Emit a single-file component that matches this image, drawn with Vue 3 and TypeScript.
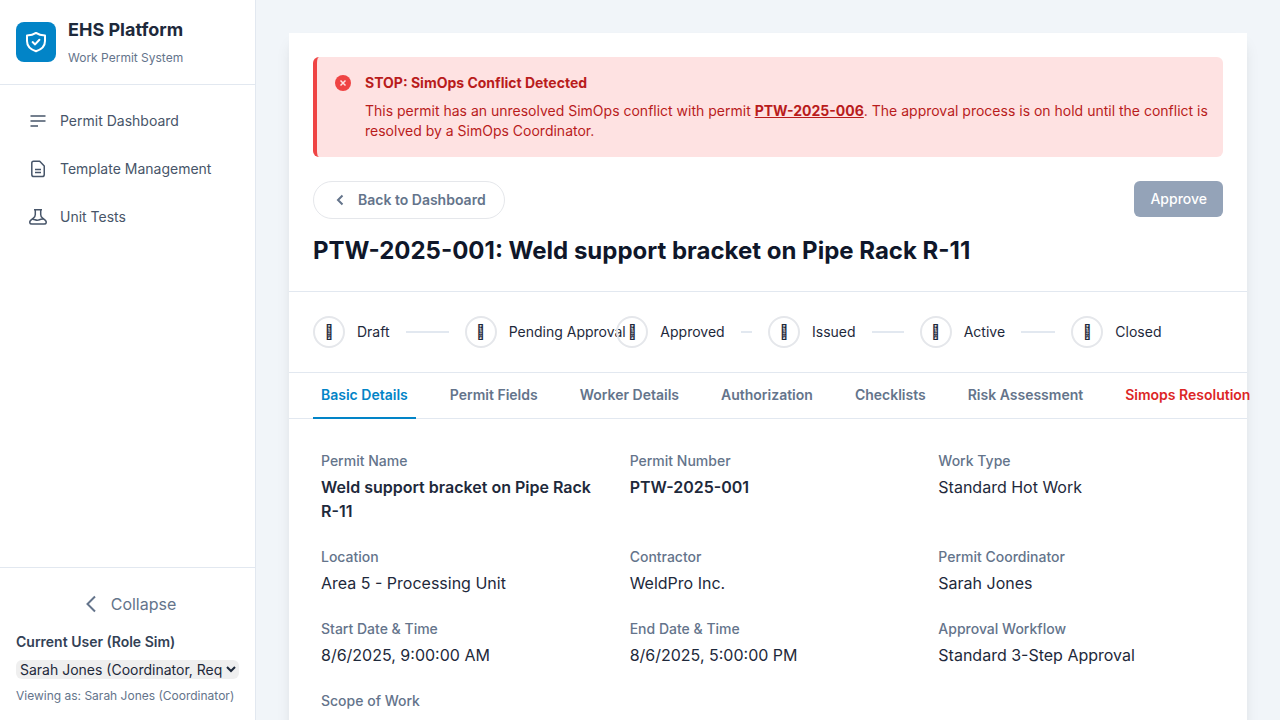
<script setup lang="ts">
import { ref } from 'vue'

interface Field {
  label: string
  value: string
  strong?: boolean
}

const missingGlyph = '\uE901'
const steps: string[] = ['Draft', 'Pending Approval', 'Approved', 'Issued', 'Active', 'Closed']
const tabs: string[] = [
  'Basic Details',
  'Permit Fields',
  'Worker Details',
  'Authorization',
  'Checklists',
  'Risk Assessment',
  'Simops Resolution',
]
const activeTab = ref<string>('Basic Details')
const user = ref<string>('sarah')

const fields: Field[] = [
  { label: 'Permit Name', value: 'Weld support bracket on Pipe Rack R-11', strong: true },
  { label: 'Permit Number', value: 'PTW-2025-001', strong: true },
  { label: 'Work Type', value: 'Standard Hot Work' },
  { label: 'Location', value: 'Area 5 - Processing Unit' },
  { label: 'Contractor', value: 'WeldPro Inc.' },
  { label: 'Permit Coordinator', value: 'Sarah Jones' },
  { label: 'Start Date & Time', value: '8/6/2025, 9:00:00 AM' },
  { label: 'End Date & Time', value: '8/6/2025, 5:00:00 PM' },
  { label: 'Approval Workflow', value: 'Standard 3-Step Approval' },
  { label: 'Scope of Work', value: '' },
]
</script>

<template>
  <div class="app">
    <aside class="sidebar">
      <header class="brand">
        <span class="logo">
          <svg width="24" height="24" viewBox="0 0 24 24" fill="none" stroke="currentColor" stroke-width="2" stroke-linecap="round" stroke-linejoin="round">
            <path d="M12 2.900C9.600 4.600 6.400 5.400 3 5.600V11c0 5.200 3.300 8.400 9 10.300 5.700-1.900 9-5.100 9-10.300V5.600C17.600 5.400 14.400 4.600 12 2.900z" />
            <path d="M8.600 12.100l2.500 2.300 4.300-4.600" />
          </svg>
        </span>
        <div>
          <h1>EHS Platform</h1>
          <p>Work Permit System</p>
        </div>
      </header>

      <nav class="nav">
        <a href="#dashboard">
          <svg width="20" height="20" viewBox="0 0 20 20" fill="none" stroke="currentColor" stroke-width="1.500">
            <path d="M2.500 5h15M2.500 10h15M2.500 15h7.500" />
          </svg>
          Permit Dashboard
        </a>
        <a href="#templates">
          <svg width="20" height="20" viewBox="0 0 20 20" fill="none" stroke="currentColor" stroke-width="1.500" stroke-linejoin="round">
            <path d="M5.500 2.250h6.200L16.250 7v8.500c0 1.300-.8 2.100-2.100 2.100H5.900c-1.300 0-2.100-.8-2.100-2.100V4.100c0-1.100.7-1.850 1.700-1.850z" />
            <path d="M7 10.500h6M7 13.500h6" />
          </svg>
          Template Management
        </a>
        <a href="#tests">
          <svg width="20" height="20" viewBox="0 0 20 20" fill="none" stroke="currentColor" stroke-width="1.500" stroke-linejoin="round">
            <path d="M6 2.800h8M7.300 2.800v4.700c0 1.700-.7 2.700-1.900 3.600l-2.500 2c-2 1.700-1.300 3.900.9 3.900h12.400c2.200 0 2.900-2.200.9-3.900l-2.500-2c-1.200-.9-1.900-1.900-1.900-3.600V2.800" />
            <path d="M4.200 12.200c2.200-.3 3.800 1.500 6 .9 1.700-.5 3.300-1.500 5.400-.9" />
          </svg>
          Unit Tests
        </a>
      </nav>

      <footer class="side-foot">
        <button type="button" class="collapse">
          <svg width="24" height="24" viewBox="0 0 24 24" fill="none" stroke="currentColor" stroke-width="2">
            <path d="M16 4.500L8.500 12l7.500 7.500" />
          </svg>
          Collapse
        </button>
        <label for="role">Current User (Role Sim)</label>
        <select id="role" v-model="user">
          <option value="sarah">Sarah Jones (Coordinator, Requester)</option>
        </select>
        <p>Viewing as: Sarah Jones (Coordinator)</p>
      </footer>
    </aside>

    <main class="main">
      <article class="card">
        <header class="head">
          <section class="alert" role="alert">
            <svg width="20" height="20" viewBox="0 0 20 20">
              <circle cx="10" cy="10" r="8" fill="#ef4444" />
              <path d="M7.500 7.500l5 5M12.500 7.500l-5 5" stroke="#fee2e2" stroke-width="1.500" />
            </svg>
            <div>
              <h2>STOP: SimOps Conflict Detected</h2>
              <p>This permit has an unresolved SimOps conflict with permit <a href="#ptw-006">PTW-2025-006</a>. The approval process is on hold until the conflict is resolved by a SimOps Coordinator.</p>
            </div>
          </section>
          <div class="actions">
            <button type="button" class="back">
              <svg width="20" height="20" viewBox="0 0 20 20" fill="none" stroke="currentColor" stroke-width="2">
                <path d="M12.500 5.500L8 10l4.500 4.500" />
              </svg>
              Back to Dashboard
            </button>
            <button type="button" class="approve" disabled>Approve</button>
          </div>
          <h2 class="title">PTW-2025-001: Weld support bracket on Pipe Rack R-11</h2>
        </header>

        <ol class="steps">
          <li v-for="(step, i) in steps" :key="step">
            <span class="dot">{{ missingGlyph }}</span>
            <span class="step-label">{{ step }}</span>
            <span v-if="i < steps.length - 1" class="line"></span>
          </li>
        </ol>

        <div class="tabs" role="tablist">
          <button
            v-for="tab in tabs"
            :key="tab"
            type="button"
            role="tab"
            :aria-selected="tab === activeTab"
            :class="{ active: tab === activeTab, danger: tab === 'Simops Resolution' }"
            @click="activeTab = tab"
          >{{ tab }}</button>
        </div>

        <dl class="fields">
          <div v-for="f in fields" :key="f.label">
            <dt>{{ f.label }}</dt>
            <dd :class="{ strong: f.strong }">{{ f.value }}</dd>
          </div>
        </dl>
      </article>
    </main>
  </div>
</template>

<style>
body {
  margin: 0;
  overflow: hidden;
}
</style>

<style scoped>
* {
  box-sizing: border-box;
}
h1, h2, p, ol, dl, dd {
  margin: 0;
  padding: 0;
}
button, select {
  font: inherit;
  cursor: pointer;
}
svg {
  flex: none;
}
.app {
  display: flex;
  height: 100vh;
  font-family: Inter, "Liberation Sans", sans-serif;
  font-size: 16px;
  line-height: 24px;
  color: #1e293b;
  background: #f1f5f9;
}
.sidebar {
  display: flex;
  flex-direction: column;
  flex: none;
  width: 256px;
  background: #fff;
  border-right: 1px solid #e2e8f0;
}
.brand {
  display: flex;
  align-items: center;
  gap: 12px;
  padding: 16px;
  border-bottom: 1px solid #e2e8f0;
}
.logo {
  display: flex;
  align-items: center;
  justify-content: center;
  width: 40px;
  height: 40px;
  border-radius: 8px;
  background: #0284c7;
  color: #fff;
}
.brand h1 {
  font-size: 18px;
  line-height: 28px;
  font-weight: 700;
}
.brand p {
  margin-top: 4px;
  font-size: 12px;
  line-height: 20px;
  color: #64748b;
}
.nav {
  display: flex;
  flex-direction: column;
  flex: 1;
  gap: 8px;
  padding: 16px;
}
.nav a {
  display: flex;
  align-items: center;
  gap: 12px;
  height: 40px;
  padding: 0 12px;
  font-size: 14px;
  color: #475569;
  text-decoration: none;
}
.side-foot {
  display: flex;
  flex-direction: column;
  padding: 16px;
  border-top: 1px solid #e2e8f0;
}
.collapse {
  display: flex;
  align-items: center;
  justify-content: center;
  gap: 8px;
  height: 40px;
  border: 0;
  background: none;
  color: #64748b;
}
.side-foot label {
  margin-top: 8px;
  font-size: 14px;
  line-height: 20px;
  font-weight: 600;
  color: #334155;
}
.side-foot select {
  width: 100%;
  height: 19px;
  margin-top: 8px;
  padding: 0;
  border: 0;
  border-radius: 6px;
  background-color: #efefef;
  font-size: 14px;
  color: #1e293b;
}
.side-foot p {
  margin-top: 9px;
  font-size: 12px;
  line-height: 16px;
  color: #64748b;
}
.main {
  flex: 1;
  min-width: 0;
  padding: 33px;
  overflow: hidden;
}
.card {
  min-height: 100%;
  background: #fff;
  box-shadow: 0 10px 15px -3px rgba(0, 0, 0, 0.1), 0 4px 6px -4px rgba(0, 0, 0, 0.1);
}
.head {
  padding: 24px;
  border-bottom: 1px solid #e2e8f0;
}
.alert {
  display: flex;
  gap: 12px;
  padding: 16px 8px 16px 16px;
  border-left: 4px solid #ef4444;
  border-radius: 6px;
  background: #fee2e2;
  color: #b91c1c;
  font-size: 14px;
  line-height: 20px;
}
.alert h2 {
  font-size: 14px;
  font-weight: 700;
}
.alert p {
  margin-top: 8px;
}
.alert a {
  color: inherit;
  font-weight: 700;
}
.actions {
  display: flex;
  align-items: flex-start;
  justify-content: space-between;
  margin-top: 24px;
}
.back {
  display: flex;
  align-items: center;
  gap: 8px;
  height: 38px;
  padding: 0 18px 0 16px;
  border: 1px solid #e5e7eb;
  border-radius: 19px;
  background: #fff;
  color: #64748b;
  font-size: 14px;
  font-weight: 600;
}
.approve {
  height: 36px;
  padding: 0 16px;
  border: 0;
  border-radius: 6px;
  background: #94a3b8;
  color: #fff;
  font-size: 14px;
  font-weight: 500;
}
.title {
  margin-top: 16px;
  font-size: 24px;
  line-height: 32px;
  font-weight: 700;
  color: #0f172a;
}
.steps {
  display: flex;
  padding: 24px;
  border-bottom: 1px solid #e2e8f0;
  list-style: none;
  font-size: 14px;
}
.steps li {
  display: flex;
  align-items: center;
  flex: 1 1 0;
  min-width: 0;
}
.dot {
  display: flex;
  align-items: center;
  justify-content: center;
  flex: none;
  width: 32px;
  height: 32px;
  border: 2px solid #e5e7eb;
  border-radius: 50%;
  font-size: 14px;
}
.step-label {
  margin-left: 12px;
  white-space: nowrap;
}
.line {
  flex: 1;
  height: 2px;
  margin: 0 16px;
  background: #e2e8f0;
}
.tabs {
  display: flex;
  gap: 26px;
  padding: 0 24px;
  border-bottom: 1px solid #e2e8f0;
}
.tabs button {
  flex: none;
  height: 46px;
  margin-bottom: -1px;
  padding: 0 8px;
  border: 0;
  border-bottom: 2px solid transparent;
  background: none;
  color: #64748b;
  font-size: 14px;
  font-weight: 600;
  white-space: nowrap;
}
.tabs .active {
  color: #0284c7;
  border-bottom-color: #0284c7;
}
.tabs .danger {
  color: #dc2626;
}
.fields {
  display: grid;
  grid-template-columns: repeat(3, minmax(0, 1fr));
  gap: 24px 32px;
  padding: 32px;
}
.fields dt {
  font-size: 14px;
  line-height: 20px;
  font-weight: 500;
  color: #64748b;
}
.fields dd {
  margin-top: 4px;
}
.fields .strong {
  font-weight: 600;
}
</style>
